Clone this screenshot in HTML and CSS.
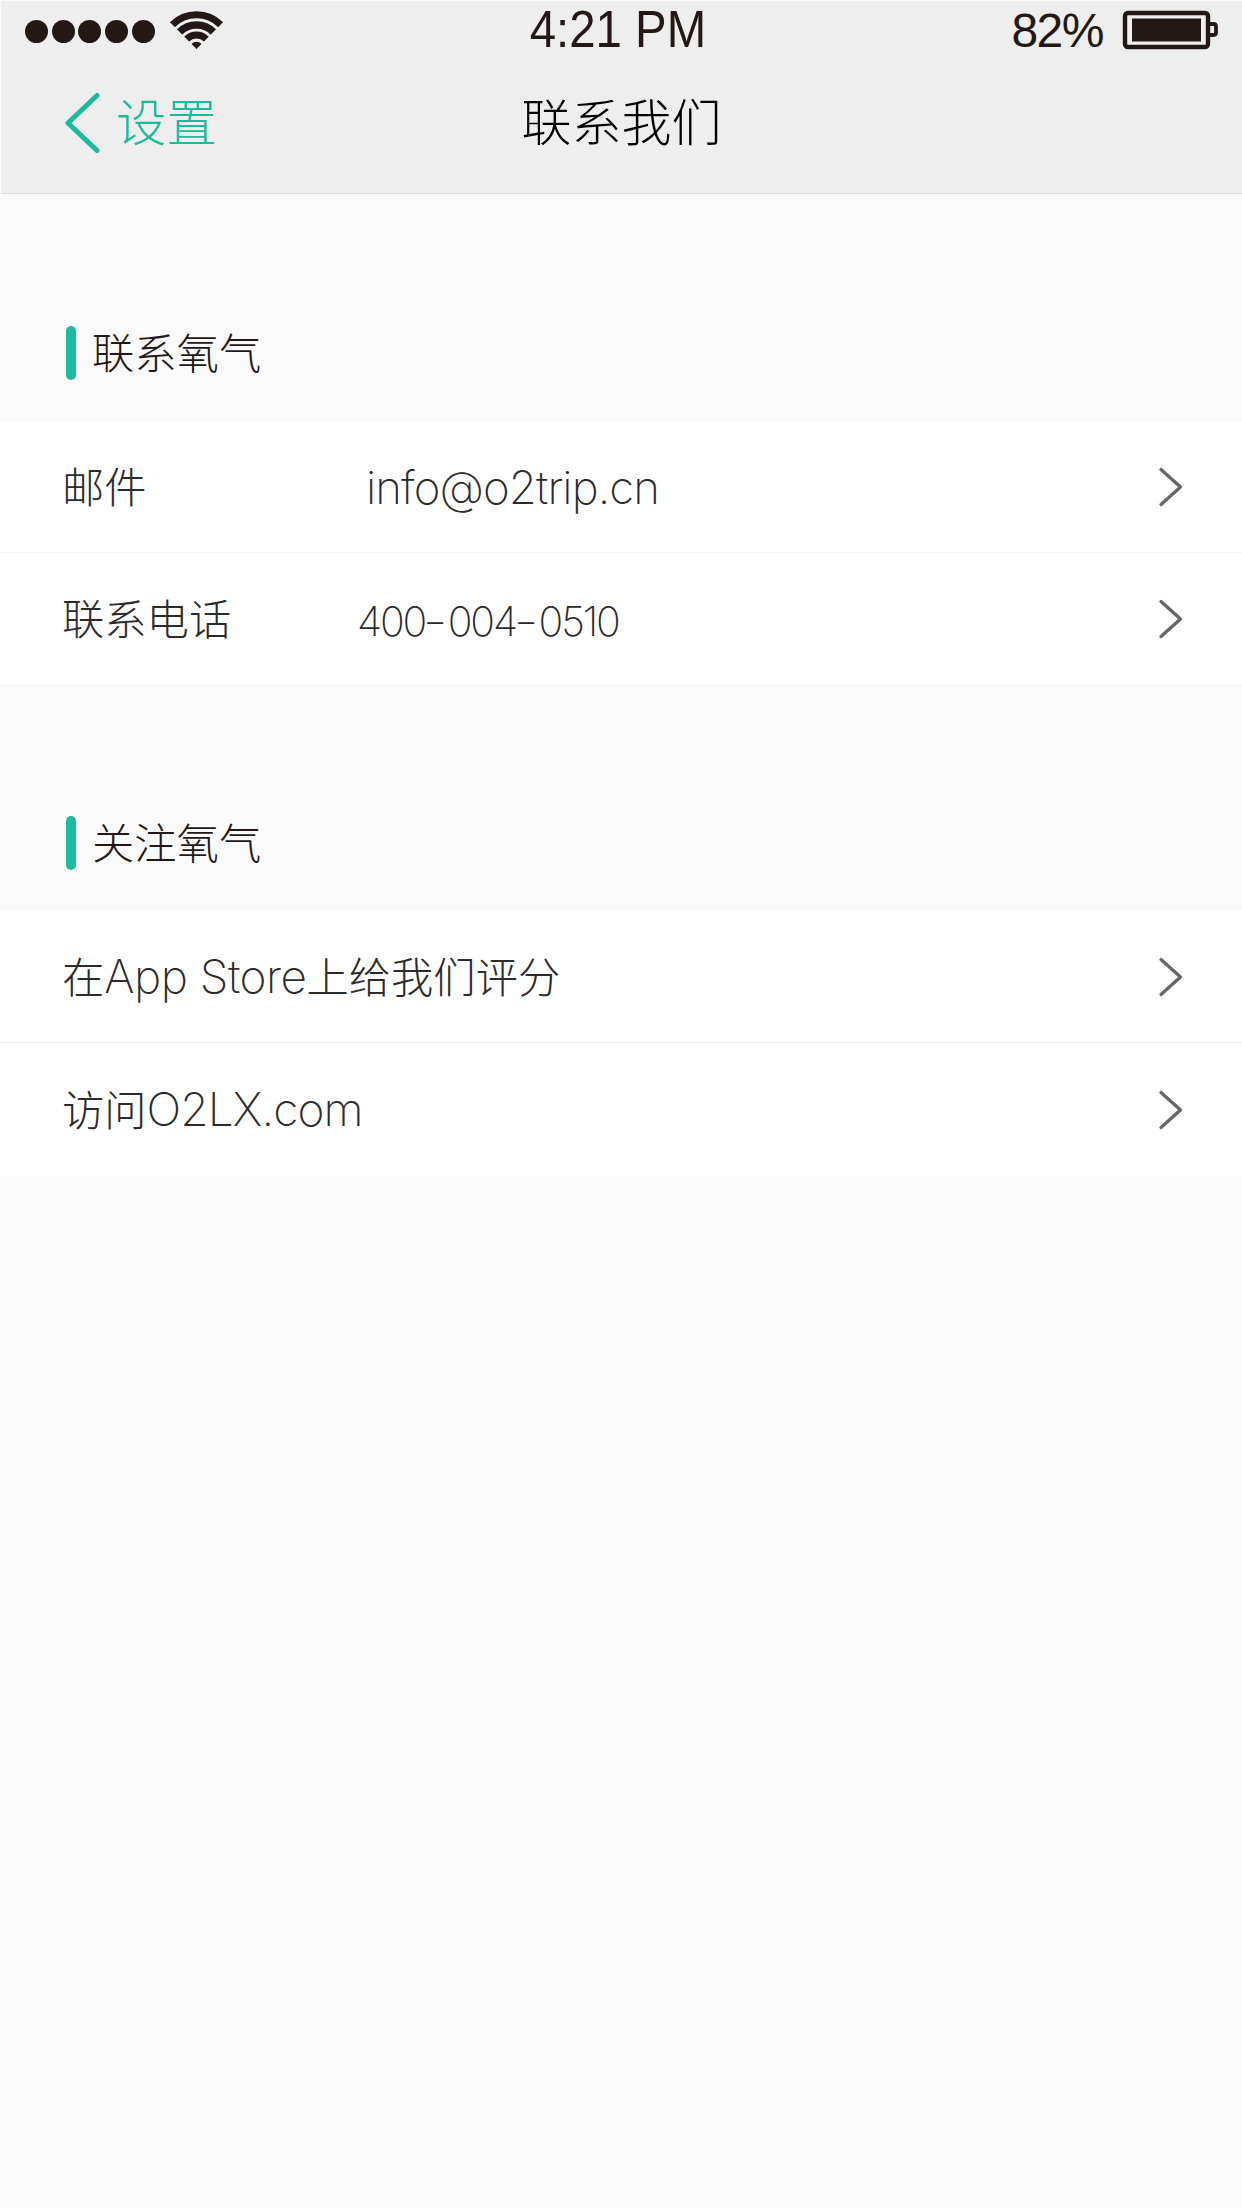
FILE: index.html
```html
<!DOCTYPE html>
<html lang="zh-CN">
<head>
<meta charset="utf-8">
<title>联系我们</title>
<link rel="stylesheet" href="styles.css">
</head>
<body>
<header class="header">
  <div class="status">
    <div class="status-left">
      <span class="dots"><i></i><i></i><i></i><i></i><i></i></span>
      <svg class="wifi" width="54" height="38" viewBox="0 0 54 38"><defs><clipPath id="fan"><path d="M26.5 38L-12 -1H65Z"/></clipPath></defs><g clip-path="url(#fan)" fill="none" stroke="#231815"><circle cx="26.5" cy="38" r="34.2" stroke-width="7"/><circle cx="26.5" cy="38" r="24" stroke-width="7.4"/><circle cx="26.5" cy="38" r="14" stroke-width="7"/><circle cx="26.5" cy="38" r="7.2" fill="#231815" stroke="none"/></g></svg>
    </div>
    <span class="time">4:21 PM</span>
    <div class="status-right">
      <span class="percent">82%</span>
      <svg class="battery" width="96" height="40" viewBox="0 0 96 40"><rect x="3" y="3" width="83" height="34" rx="3" fill="none" stroke="#231815" stroke-width="4.4"/><rect x="10" y="8.5" width="69" height="23" fill="#231815"/><path d="M87 14h4.500q2.500 0 2.500 2.500v6q0 2.500-2.500 2.500h-4.500" fill="none" stroke="#231815" stroke-width="3.800"/></svg>
    </div>
  </div>
  <nav class="nav">
    <a class="back"><svg width="36" height="62" viewBox="0 0 36 62"><path d="M33 3.500L4 31L33 58.500" fill="none" stroke="#1abc9c" stroke-width="5" stroke-linecap="round" stroke-linejoin="round"/></svg><span class="back-label">设置</span></a>
    <h1 class="title">联系我们</h1>
  </nav>
</header>
<main>
  <h2 class="section"><span class="bar"></span><span class="section-text">联系氧气</span></h2>
  <ul class="list contact">
    <li class="row"><span class="label">邮件</span><span class="value email">info@o2trip.cn</span><svg class="chevron" width="26" height="40" viewBox="0 0 26 40"><path d="M3 2.500L22.500 20L3 37.500"/></svg></li>
    <li class="row"><span class="label">联系电话</span><span class="value phone">400<span class="dash">-</span>004<span class="dash">-</span>0510</span><svg class="chevron" width="26" height="40" viewBox="0 0 26 40"><path d="M3 2.500L22.500 20L3 37.500"/></svg></li>
  </ul>
  <h2 class="section"><span class="bar"></span><span class="section-text">关注氧气</span></h2>
  <ul class="list follow">
    <li class="row"><span class="label">在<span class="latin store">App Store</span>上给我们评分</span><svg class="chevron" width="26" height="40" viewBox="0 0 26 40"><path d="M3 2.500L22.500 20L3 37.500"/></svg></li>
    <li class="row"><span class="label">访问<span class="latin site">O2LX.com</span></span><svg class="chevron" width="26" height="40" viewBox="0 0 26 40"><path d="M3 2.500L22.500 20L3 37.500"/></svg></li>
  </ul>
</main>
</body>
</html>
```
FILE: styles.css
```css
* { box-sizing: border-box; }
body { margin: 0; background: #fafafa; color: #2b2b2b; font-family: "Noto Sans CJK SC", sans-serif; font-weight: 300; }
svg { display: block; flex: none; }

.header { height: 194px; background: #eee; border: solid #fafafa; border-width: 1px 0 0 1px; box-shadow: inset 0 -1px #dedede; }
.status { height: 55px; display: grid; grid-template-columns: 1fr auto 1fr; align-items: center; padding: 0 24px; color: #231815; font: 400 51.500px/55px "Liberation Sans", sans-serif; }
.status-left, .status-right { display: flex; align-items: center; }
.status-left { gap: 15px; }
.status-right { justify-content: flex-end; gap: 19px; }
.dots { display: flex; gap: 3.700px; padding-top: 3px; }
.dots i { width: 23px; height: 23px; border-radius: 50%; background: #231815; }
.time { transform: translateX(-4px) scaleX(.92); }
.percent { font-size: 48px; letter-spacing: -1.500px; padding-top: 2px; }

.nav { height: 134px; display: grid; grid-template-columns: 1fr auto 1fr; align-items: center; padding: 0 63px; }
.back { display: flex; align-items: center; gap: 16px; color: #1abc9c; font-size: 50.500px; }
.back-label, .title { line-height: 60px; padding-bottom: 9px; }
.title { margin: 0; color: #000; font-size: 50px; font-weight: 300; }

.section { margin: 0; height: 227px; padding: 132px 66px 0; display: flex; align-items: flex-start; gap: 16px; font-size: 42.300px; line-height: 50px; font-weight: 300; color: #231815; }
.list + .section { height: 226px; padding-top: 131px; }
.bar { width: 10px; height: 54px; border-radius: 5px; background: #1abc9c; }

.list { margin: 0; padding: 0; list-style: none; background: #fff; }
.row { height: 132px; display: flex; align-items: center; padding: 0 58px 0 62px; font-size: 42.300px; line-height: 60px; }
.contact .row { box-shadow: inset 0 -1px #f7f7f7; }
.follow .row:first-child { box-shadow: inset 0 -1px #eee; }
.follow .row:last-child { height: 133px; }
.label { padding-bottom: 3px; white-space: nowrap; }
.contact .label { width: 295px; flex: none; padding-bottom: 5px; }
.chevron { margin-left: auto; fill: none; stroke: #666; stroke-width: 3.300; stroke-linecap: round; stroke-linejoin: round; }
.latin, .value { font-family: Inter, sans-serif; font-weight: 200; }
.email { font-size: 45.500px; letter-spacing: -.9px; padding: 2px 0 0 9px; }
.phone { font-size: 41px; letter-spacing: -2.200px; padding-top: 3px; }
.dash { display: inline-block; letter-spacing: 0; margin: 0 3.500px 0 1px; transform: scaleX(1.350); }
.store { font-size: 46px; letter-spacing: -.500px; }
.site { font-size: 46px; letter-spacing: -.9px; }
```
